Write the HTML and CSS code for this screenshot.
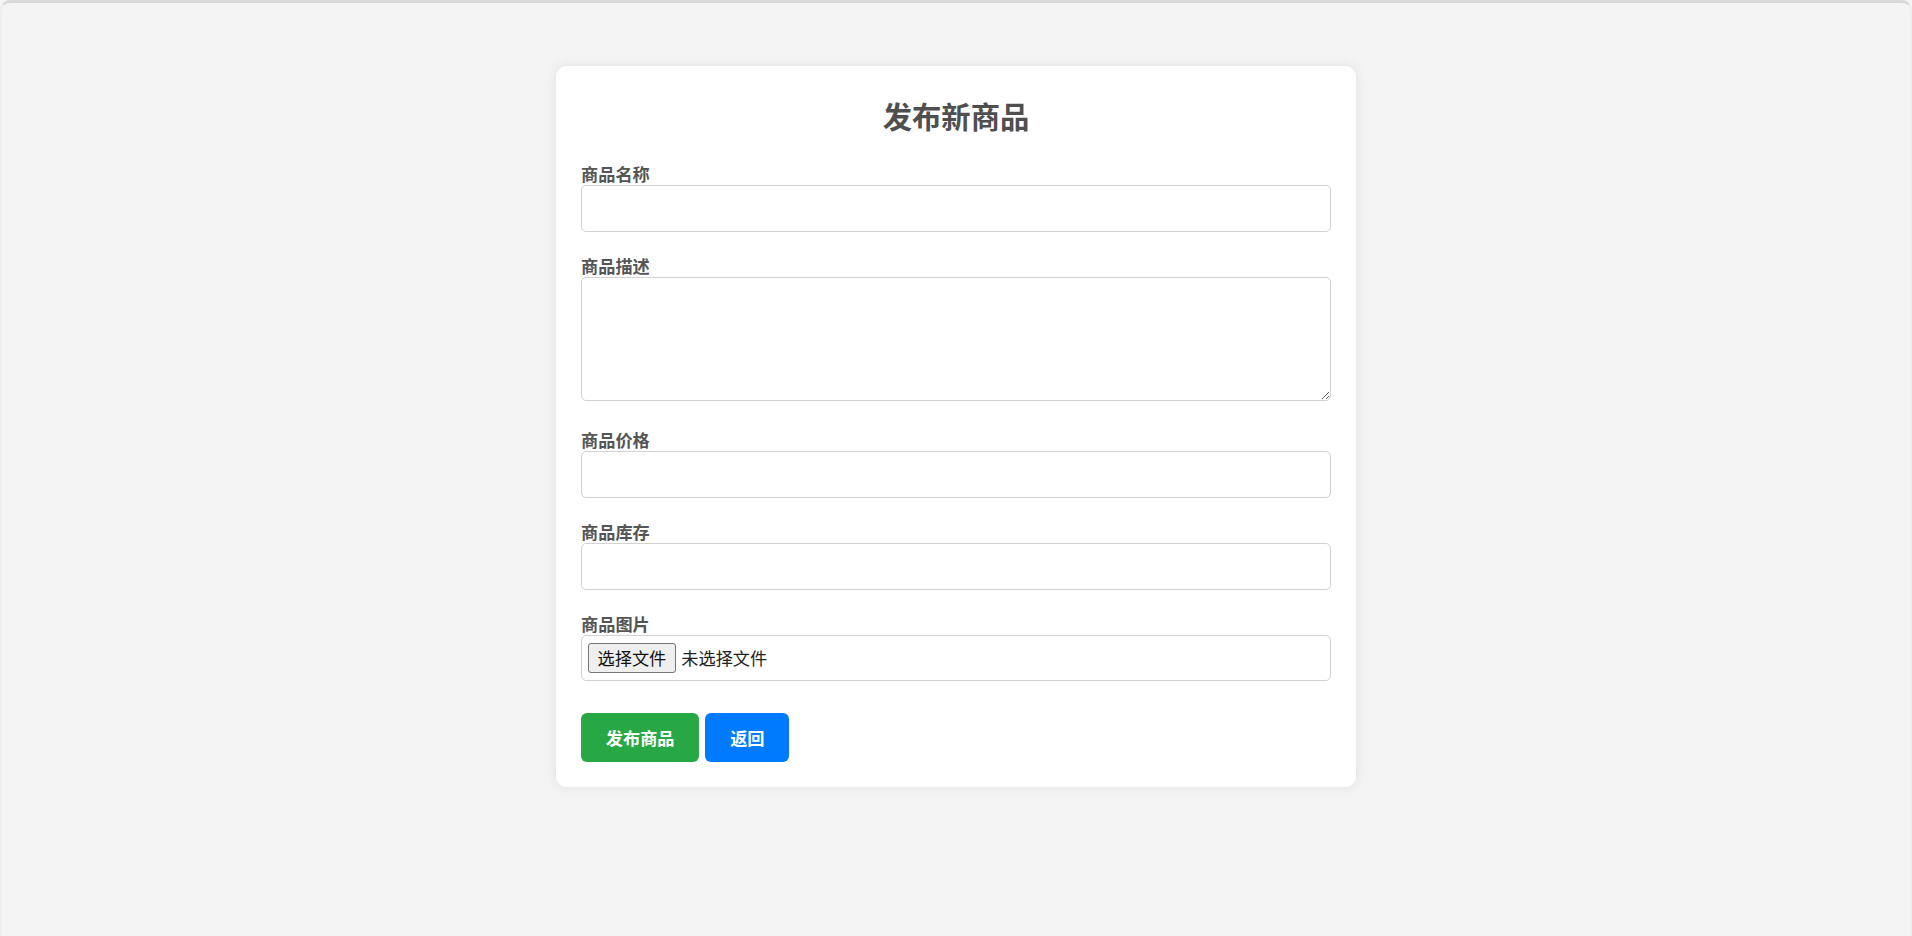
FILE: index.html
```html
<!DOCTYPE html>
<html lang="zh-CN">
<head>
<meta charset="utf-8">
<title>发布新商品</title>
<link rel="stylesheet" href="styles.css">
</head>
<body>
<div class="window">
  <div class="card">
    <h2 class="title">发布新商品</h2>
    <form class="form">
      <div class="group">
        <label class="label" for="name">商品名称</label>
        <input class="field" id="name" type="text">
      </div>
      <div class="group">
        <label class="label" for="desc">商品描述</label>
        <textarea class="field area" id="desc"></textarea>
      </div>
      <div class="group">
        <label class="label" for="price">商品价格</label>
        <input class="field" id="price" type="text">
      </div>
      <div class="group">
        <label class="label" for="stock">商品库存</label>
        <input class="field" id="stock" type="text">
      </div>
      <div class="group">
        <label class="label">商品图片</label>
        <div class="file-field">
          <button type="button" class="file-btn">选择文件</button>
          <span class="file-text">未选择文件</span>
        </div>
      </div>
      <div class="actions">
        <button type="button" class="btn btn-green">发布商品</button>
        <button type="button" class="btn btn-blue">返回</button>
      </div>
    </form>
  </div>
</div>
</body>
</html>
```

FILE: styles.css
```css
html, body {
  margin: 0;
  padding: 0;
  background: #f4f4f4;
}

body {
  font-family: "Noto Sans CJK SC", "Noto Sans", "Liberation Sans", sans-serif;
}

.window {
  min-height: 100vh;
  box-sizing: border-box;
  border-top: 3px solid #d9d9d9;
  border-left: 2px solid #efefef;
  border-right: 2px solid #efefef;
  border-radius: 10px 10px 0 0;
  padding-top: 63px;
}

.card {
  width: 800px;
  box-sizing: border-box;
  margin: 0 auto;
  background: #fff;
  padding: 25px;
  border-radius: 10px;
  box-shadow: 0 0 12px rgba(0, 0, 0, 0.09);
}

.title {
  margin: 6px 0 30px;
  font-size: 29.3px;
  line-height: 36px;
  font-weight: 700;
  color: #4f4f4f;
  text-align: center;
}

.form {
  margin: 0;
  display: flex;
  flex-direction: column;
}

.group {
  margin-bottom: 23px;
}

.label {
  display: block;
  font-size: 17.2px;
  line-height: 22px;
  font-weight: 700;
  color: #555;
}

.field {
  display: block;
  width: 100%;
  box-sizing: border-box;
  height: 47px;
  margin: 0;
  padding: 8px 12px;
  border: 1px solid #d2d2d2;
  border-radius: 5px;
  background: #fff;
  font-family: inherit;
  font-size: 17px;
  color: #333;
}

.area {
  height: 123.5px;
  margin-bottom: 5.5px;
  resize: vertical;
}

.file-field {
  display: flex;
  align-items: center;
  box-sizing: border-box;
  height: 45.5px;
  padding: 0 6px;
  border: 1px solid #d2d2d2;
  border-radius: 5px;
  background: #fff;
}

.file-btn {
  height: 30.4px;
  box-sizing: border-box;
  padding: 0 8.5px;
  margin: 0 5.5px 0 0;
  border: 1px solid #767676;
  border-radius: 3px;
  background: #efefef;
  font-family: inherit;
  font-size: 17.2px;
  line-height: 28px;
  color: #111;
}

.file-text {
  font-size: 17.2px;
  color: #222;
}

.actions {
  display: flex;
  gap: 6px;
  margin-top: 9.3px;
}

.btn {
  height: 49.4px;
  box-sizing: border-box;
  padding: 0 24.8px;
  border: none;
  border-radius: 6px;
  font-family: inherit;
  font-size: 17.2px;
  font-weight: 700;
  color: #fff;
}

.btn-green {
  background: #28a745;
}

.btn-blue {
  background: #007bff;
}
```
